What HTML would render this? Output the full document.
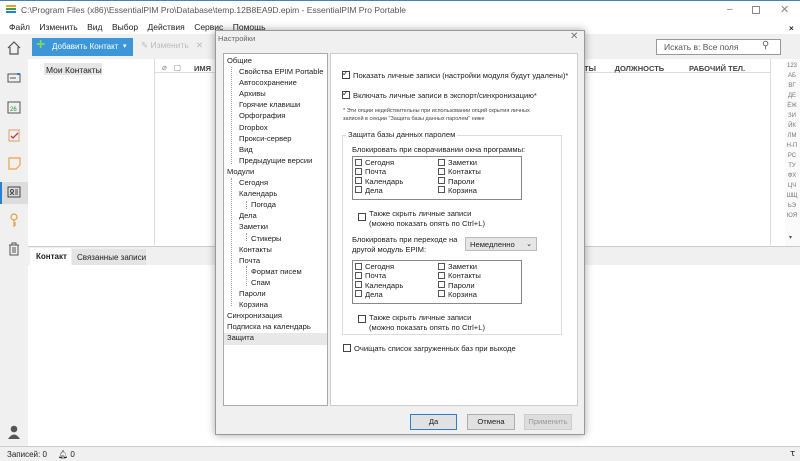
<!DOCTYPE html>
<html><head><meta charset="utf-8"><style>
*{margin:0;padding:0;box-sizing:border-box}
body{width:800px;height:461px;overflow:hidden;background:#fff;font-family:"Liberation Sans","DejaVu Sans",sans-serif;font-size:8px;color:#222;position:relative}
.a{position:absolute;white-space:nowrap}
.d{font-size:7.6px}
.cb{position:absolute;width:8px;height:8px;border:1px solid #444;background:#fff}
.cbs{position:absolute;width:7px;height:7px;border:1px solid #555;background:#fff}
.btn{position:absolute;height:16px;border:1px solid #adadad;background:#e1e1e1;text-align:center;line-height:14px;font-size:7.6px}
</style></head><body>
<div class="a" style="left:0;top:0;width:800px;height:20px;background:#fff;border-top:1px solid #4a7fb5"></div>
<div class="a" style="left:6px;top:5px;width:10px;height:2px;background:#f0a020"></div>
<div class="a" style="left:6px;top:8px;width:10px;height:2px;background:#3aa050"></div>
<div class="a" style="left:6px;top:11px;width:10px;height:2px;background:#2a7fd0"></div>
<div class="a" style="left:21px;top:5px;color:#555;font-size:8.5px">C:\Program Files (x86)\EssentialPIM Pro\Database\temp.12B8EA9D.epim - EssentialPIM Pro Portable</div>
<div class="a" style="left:727px;top:4px;color:#777;font-size:10px">–</div>
<div class="a" style="left:752px;top:6px;width:8px;height:8px;border:1px solid #888"></div>
<div class="a" style="left:780px;top:3px;color:#888;font-size:11px">✕</div>
<div class="a" style="left:0;top:20px;width:800px;height:14px;background:#fff"></div>
<div class="a" style="left:9px;top:22px;font-size:8.5px">Файл&nbsp;&nbsp;&nbsp;&nbsp;Изменить&nbsp;&nbsp;&nbsp;&nbsp;Вид&nbsp;&nbsp;&nbsp;&nbsp;Выбор&nbsp;&nbsp;&nbsp;&nbsp;Действия&nbsp;&nbsp;&nbsp;&nbsp;Сервис&nbsp;&nbsp;&nbsp;&nbsp;Помощь</div>
<div class="a" style="left:789px;top:24px;font-size:8px;font-weight:bold">×</div>
<div class="a" style="left:0;top:34px;width:28px;height:412px;background:#f0f0f0"></div>
<div class="a" style="left:0;top:182px;width:28px;height:22px;background:#dcdcdc;border-left:2px solid #2a7fd0"></div>
<svg class="a" style="left:7px;top:41px" width="14" height="14"><path d="M1 7L7 1L13 7M3 6V13H11V6" fill="none" stroke="#555" stroke-width="1.2"/></svg>
<svg class="a" style="left:7px;top:72px" width="14" height="12"><rect x="1" y="2" width="12" height="8" fill="none" stroke="#555"/><path d="M3 6H9" stroke="#555"/><rect x="10" y="1" width="3" height="2" fill="#2a7fd0"/></svg>
<svg class="a" style="left:7px;top:100px" width="14" height="14"><rect x="1" y="2" width="12" height="11" fill="none" stroke="#555"/><text x="3" y="11" font-size="6" fill="#2a8040" font-family="Liberation Sans">26</text></svg>
<svg class="a" style="left:8px;top:128px" width="13" height="14"><rect x="1" y="2" width="10" height="11" fill="none" stroke="#e0a060"/><path d="M3 8L5 10L10 5" stroke="#d03040" fill="none" stroke-width="1.3"/></svg>
<svg class="a" style="left:8px;top:157px" width="13" height="13"><path d="M1 1H12V8L8 12H1Z" fill="none" stroke="#f0a040" stroke-width="1.2"/></svg>
<svg class="a" style="left:7px;top:186px" width="14" height="12"><rect x="1" y="1" width="12" height="10" fill="none" stroke="#444"/><circle cx="5" cy="5" r="1.5" fill="none" stroke="#444"/><path d="M3 9Q5 6 7 9M8 4H11M8 6H11M8 8H11" stroke="#444" fill="none"/></svg>
<svg class="a" style="left:10px;top:213px" width="8" height="15"><circle cx="4" cy="4" r="3" fill="none" stroke="#e0a040" stroke-width="1.2"/><path d="M4 7V14M4 10H6M4 12H6" stroke="#e0a040" stroke-width="1.2"/></svg>
<svg class="a" style="left:8px;top:242px" width="12" height="14"><path d="M1 3H11M4 3V1H8V3M2 3V13H10V3M5 5V11M7 5V11" stroke="#555" fill="none"/></svg>
<svg class="a" style="left:8px;top:425px" width="12" height="14"><circle cx="6" cy="4" r="3.3" fill="#555"/><path d="M0 14Q6 5 12 14Z" fill="#555"/></svg>
<div class="a" style="left:28px;top:34px;width:772px;height:25px;background:#f0f0f0"></div>
<div class="a" style="left:32px;top:38px;width:101px;height:18px;background:#3c96d8"></div>
<div class="a" style="left:36px;top:36px;color:#7ed860;font-size:16px;font-weight:bold">+</div>
<div class="a" style="left:52px;top:42px;color:#fff;font-size:8px">Добавить Контакт</div>
<div class="a" style="left:123px;top:42px;color:#fff;font-size:7px">▾</div>
<div class="a" style="left:141px;top:40px;color:#bbb;font-size:8.5px">✎ Изменить&nbsp;&nbsp;&nbsp;✕</div>
<div class="a" style="left:656px;top:39px;width:125px;height:16px;background:#fff;border:1px solid #999"></div>
<div class="a" style="left:664px;top:42px;color:#555;font-size:8.5px">Искать в: Все поля</div>
<div class="a" style="left:762px;top:40px;color:#666;font-size:10px">⚲</div>
<div class="a" style="left:44px;top:63px;width:58px;height:12px;background:#e6e6e6"></div>
<div class="a" style="left:46px;top:65px;font-size:8.5px">Мои Контакты</div>
<div class="a" style="left:154px;top:59px;width:1px;height:186px;background:#ddd"></div>
<div class="a" style="left:155px;top:59px;width:615px;height:14px;border-bottom:1px solid #ddd"></div>
<div class="a" style="left:162px;top:63px;color:#888;font-size:8px">⌀&nbsp;&nbsp;&nbsp;▢&nbsp;&nbsp;</div>
<div class="a" style="left:194px;top:64px;font-size:7.5px;font-weight:bold;color:#444">ИМЯ</div>
<div class="a" style="left:584px;top:64px;font-size:7.5px;font-weight:bold;color:#444">ТЫ&nbsp;&nbsp;&nbsp;&nbsp;&nbsp;&nbsp;&nbsp;&nbsp;&nbsp;ДОЛЖНОСТЬ</div>
<div class="a" style="left:689px;top:64px;font-size:7.5px;font-weight:bold;color:#444">РАБОЧИЙ ТЕЛ.</div>
<div class="a" style="left:770px;top:59px;width:30px;height:186px;border-left:1px solid #ddd"></div>
<div class="a" style="left:785px;top:60px;width:15px;height:186px;background:#fafafa"></div>
<div class="a" style="left:785px;top:61px;font-size:6px;color:#777;line-height:10px;text-align:center;width:14px;white-space:normal">123 АБ ВГ ДЕ ЁЖ ЗИ ЙК ЛМ Н-П РС ТУ ФХ ЦЧ ШЩ ЬЭ ЮЯ</div>
<div class="a" style="left:789px;top:234px;font-size:6px;color:#555">▾</div>
<div class="a" style="left:28px;top:246px;width:772px;height:19px;background:#f0f0f0;border-top:1px solid #ccc"></div>
<div class="a" style="left:30px;top:248px;width:41px;height:17px;background:#fff"></div>
<div class="a" style="left:36px;top:252px;font-size:8px;font-weight:bold">Контакт</div>
<div class="a" style="left:72px;top:249px;width:74px;height:16px;background:#e4e4e4"></div>
<div class="a" style="left:77px;top:253px;font-size:8px">Связанные записи</div>
<div class="a" style="left:0;top:446px;width:800px;height:15px;background:#f0f0f0;border-top:1px solid #ccc"></div>
<div class="a" style="left:7px;top:450px;font-size:8px">Записей: 0&nbsp;&nbsp;&nbsp;&nbsp;&nbsp;🔔︎ 0</div>
<div class="a" style="left:790px;top:448px;font-size:9px">ꚍ</div>

<div class="a" style="left:215px;top:30px;width:370px;height:405px;background:#f0f0f0;border:1px solid #999;box-shadow:0 0 8px rgba(0,0,0,.35)"></div>
<div class="a d" style="left:218px;top:34px;color:#666">Настройки</div>
<div class="a" style="left:570px;top:31px;color:#777;font-size:10px">✕</div>
<div class="a" style="left:223px;top:53px;width:105px;height:353px;background:#fff;border:1px solid #aaa"></div>
<div class="a" style="left:224px;top:333px;width:103px;height:12px;background:#e8e8e8"></div>
<div class="a" style="left:231px;top:67px;width:1px;height:97px;border-left:1px dotted #999"></div>
<div class="a" style="left:231px;top:178px;width:1px;height:128px;border-left:1px dotted #999"></div>
<div class="a" style="left:246px;top:201px;width:1px;height:8px;border-left:1px dotted #999"></div>
<div class="a" style="left:246px;top:233px;width:1px;height:8px;border-left:1px dotted #999"></div>
<div class="a" style="left:246px;top:266px;width:1px;height:20px;border-left:1px dotted #999"></div>
<div class="a d" style="left:227px;top:55px;line-height:11.1px">
Общие<br>
<span style="padding-left:12px">Свойства EPIM Portable</span><br>
<span style="padding-left:12px">Автосохранение</span><br>
<span style="padding-left:12px">Архивы</span><br>
<span style="padding-left:12px">Горячие клавиши</span><br>
<span style="padding-left:12px">Орфография</span><br>
<span style="padding-left:12px">Dropbox</span><br>
<span style="padding-left:12px">Прокси-сервер</span><br>
<span style="padding-left:12px">Вид</span><br>
<span style="padding-left:12px">Предыдущие версии</span><br>
Модули<br>
<span style="padding-left:12px">Сегодня</span><br>
<span style="padding-left:12px">Календарь</span><br>
<span style="padding-left:24px">Погода</span><br>
<span style="padding-left:12px">Дела</span><br>
<span style="padding-left:12px">Заметки</span><br>
<span style="padding-left:24px">Стикеры</span><br>
<span style="padding-left:12px">Контакты</span><br>
<span style="padding-left:12px">Почта</span><br>
<span style="padding-left:24px">Формат писем</span><br>
<span style="padding-left:24px">Спам</span><br>
<span style="padding-left:12px">Пароли</span><br>
<span style="padding-left:12px">Корзина</span><br>
Синхронизация<br>
Подписка на календарь<br>
Защита</div>
<div class="a" style="left:330px;top:53px;width:248px;height:353px;background:#fff;border:1px solid #ccc"></div>
<div class="cb" style="left:342px;top:71px"></div><div class="a" style="left:342px;top:69px;font-size:8px">✓</div>
<div class="a d" style="left:353px;top:71px">Показать личные записи (настройки модуля будут удалены)*</div>
<div class="cb" style="left:342px;top:91px"></div><div class="a" style="left:342px;top:89px;font-size:8px">✓</div>
<div class="a d" style="left:353px;top:91px">Включать личные записи в экспорт/синхронизацию*</div>
<div class="a" style="left:343px;top:107px;font-size:5.5px;color:#444;line-height:8px">* Эти опции недействительны при использовании опций скрытия личных<br>записей в секции "Защита базы данных паролем" ниже</div>
<div class="a" style="left:342px;top:135px;width:220px;height:200px;border:1px solid #ddd"></div>
<div class="a d" style="left:346px;top:130px;background:#fff;padding:0 2px">Защита базы данных паролем</div>
<div class="a d" style="left:352px;top:145px">Блокировать при сворачивании окна программы:</div>
<div class="a" style="left:352px;top:156px;width:170px;height:44px;border:1px solid #888"></div>
<div class="a" style="left:352px;top:260px;width:170px;height:44px;border:1px solid #888"></div>
<div class="a d" style="left:354px;top:158px;line-height:9.3px">
<div style="position:relative;height:37px">
<div class="cbs" style="left:1px;top:1px"></div><div class="cbs" style="left:1px;top:10px"></div><div class="cbs" style="left:1px;top:19px"></div><div class="cbs" style="left:1px;top:28px"></div>
<div class="cbs" style="left:84px;top:1px"></div><div class="cbs" style="left:84px;top:10px"></div><div class="cbs" style="left:84px;top:19px"></div><div class="cbs" style="left:84px;top:28px"></div>
<div class="a" style="left:11px;top:0">Сегодня<br>Почта<br>Календарь<br>Дела</div>
<div class="a" style="left:94px;top:0">Заметки<br>Контакты<br>Пароли<br>Корзина</div>
</div></div>
<div class="a d" style="left:354px;top:262px;line-height:9.3px">
<div style="position:relative;height:37px">
<div class="cbs" style="left:1px;top:1px"></div><div class="cbs" style="left:1px;top:10px"></div><div class="cbs" style="left:1px;top:19px"></div><div class="cbs" style="left:1px;top:28px"></div>
<div class="cbs" style="left:84px;top:1px"></div><div class="cbs" style="left:84px;top:10px"></div><div class="cbs" style="left:84px;top:19px"></div><div class="cbs" style="left:84px;top:28px"></div>
<div class="a" style="left:11px;top:0">Сегодня<br>Почта<br>Календарь<br>Дела</div>
<div class="a" style="left:94px;top:0">Заметки<br>Контакты<br>Пароли<br>Корзина</div>
</div></div>
<div class="cb" style="left:358px;top:213px"></div>
<div class="a d" style="left:369px;top:209px;line-height:10px">Также скрыть личные записи<br>(можно показать опять по Ctrl+L)</div>
<div class="a d" style="left:352px;top:235px;line-height:10px">Блокировать при переходе на<br>другой модуль EPIM:</div>
<div class="a d" style="left:465px;top:237px;width:72px;height:14px;background:#e6e6e6;border:1px solid #bbb;padding:2px 4px">Немедленно<span style="float:right;font-size:7px">⌄</span></div>
<div class="cb" style="left:358px;top:315px"></div>
<div class="a d" style="left:369px;top:313px;line-height:10px">Также скрыть личные записи<br>(можно показать опять по Ctrl+L)</div>
<div class="cb" style="left:343px;top:344px"></div>
<div class="a d" style="left:354px;top:344px">Очищать список загруженных баз при выходе</div>
<div class="btn" style="left:410px;top:414px;width:47px;border:1px solid #2a7fd0">Да</div>
<div class="btn" style="left:467px;top:414px;width:48px">Отмена</div>
<div class="btn" style="left:524px;top:414px;width:48px;color:#999;border-color:#ccc;background:#ddd">Применить</div>
</body></html>
